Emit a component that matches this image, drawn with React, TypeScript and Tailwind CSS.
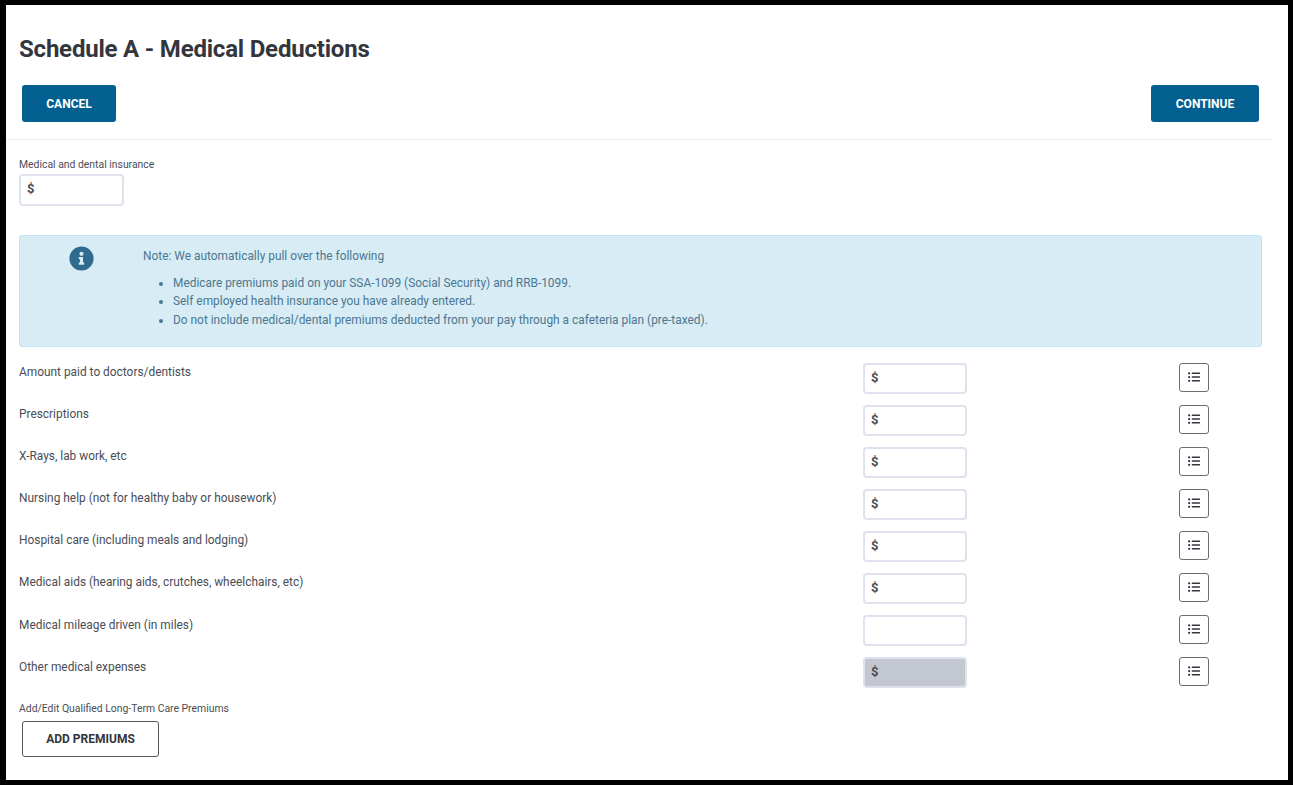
import { FaInfoCircle, FaListUl } from 'react-icons/fa';

const rows = [
    { label: 'Amount paid to doctors/dentists', prefix: true },
    { label: 'Prescriptions', prefix: true },
    { label: 'X-Rays, lab work, etc', prefix: true },
    { label: 'Nursing help (not for healthy baby or housework)', prefix: true },
    { label: 'Hospital care (including meals and lodging)', prefix: true },
    { label: 'Medical aids (hearing aids, crutches, wheelchairs, etc)', prefix: true },
    { label: 'Medical mileage driven (in miles)', prefix: false, shift: true },
    { label: 'Other medical expenses', prefix: true, disabled: true, shift: true },
];

function MoneyInput({ prefix = true, disabled = false, large = false }: { prefix?: boolean; disabled?: boolean; large?: boolean }) {
    return (
        <div
            className={`flex items-center rounded-[4px] border-2 border-[#dfe1ee] px-[6px] pb-[2px] text-[13px] font-bold text-[#4a4d55] ${
                large ? 'h-[32px] w-[105px]' : 'h-[31px] w-[104px]'
            } ${disabled ? 'bg-[#c3c7d0]' : 'bg-white'}`}
        >
            {prefix && <span>$</span>}
        </div>
    );
}

export default function App() {
    return (
        <div className="h-[785px] w-[1293px] overflow-hidden border-y-[5px] border-r-[5px] border-l-[6px] border-black bg-white font-['Roboto',sans-serif] text-[#4a4d55]">
            {/* Header */}
            <div className="mr-4 border-b border-[#eeeeee] pb-[17px]">
                <h1 className="pt-[28px] pl-[13px] text-[24px] leading-[32px] font-bold tracking-[-0.2px] text-[#33363d]">
                    Schedule A - Medical Deductions
                </h1>
                <div className="mt-[20px] flex justify-between pr-[13px] pl-4">
                    <button className="h-[37px] w-[94px] rounded-[3px] bg-[#035f8f] text-[12px] font-bold text-white">
                        CANCEL
                    </button>
                    <button className="h-[37px] w-[108px] rounded-[3px] bg-[#035f8f] text-[12px] font-bold text-white">
                        CONTINUE
                    </button>
                </div>
            </div>

            <div className="pr-[26px] pl-[13px]">
                {/* Medical and dental insurance */}
                <div className="pt-[18px] text-[10.4px] leading-[14px]">Medical and dental insurance</div>
                <div className="mt-[2px]">
                    <MoneyInput large />
                </div>

                {/* Note */}
                <div className="mt-[29px] flex h-[112px] rounded-[3px] border border-[#bee5f0] bg-[#d8ecf5] text-[11.9px] text-[#4b7790]">
                    <div className="flex w-[123px] shrink-0 justify-center pt-[10px]">
                        <FaInfoCircle className="h-[25px] w-[25px] text-[#2f6b8f]" />
                    </div>
                    <div className="pt-[12px]">
                        <p className="leading-[16px]">Note: We automatically pull over the following</p>
                        <ul className="mt-[10px] list-disc pl-[30px] leading-[18.4px]">
                            <li>Medicare premiums paid on your SSA-1099 (Social Security) and RRB-1099.</li>
                            <li>Self employed health insurance you have already entered.</li>
                            <li>Do not include medical/dental premiums deducted from your pay through a cafeteria plan (pre-taxed).</li>
                        </ul>
                    </div>
                </div>

                {/* Expense rows */}
                <div className="mt-[16px]">
                    {rows.map((row) => (
                        <div key={row.label} className="flex h-[42px]">
                            <div className={`w-[844px] text-[11.9px] leading-[16px] ${row.shift ? 'pt-[2px]' : 'pt-[1px]'}`}>
                                {row.label}
                            </div>
                            <MoneyInput prefix={row.prefix} disabled={row.disabled} />
                            <button className="ml-[212px] flex h-[29px] w-[30px] items-center justify-center rounded-[3px] border border-[#6b6d75] bg-white pb-[2px] text-[#33363d]">
                                <FaListUl className="h-[12px] w-[12px]" />
                            </button>
                        </div>
                    ))}
                </div>

                {/* Long-term care */}
                <div className="mt-[3px] text-[10.4px] leading-[14px]">Add/Edit Qualified Long-Term Care Premiums</div>
                <button className="mt-[5px] ml-[3px] h-[36px] w-[137px] rounded-[3px] border border-[#55575e] bg-white text-[12px] font-bold text-[#33363d]">
                    ADD PREMIUMS
                </button>
            </div>
        </div>
    );
}
